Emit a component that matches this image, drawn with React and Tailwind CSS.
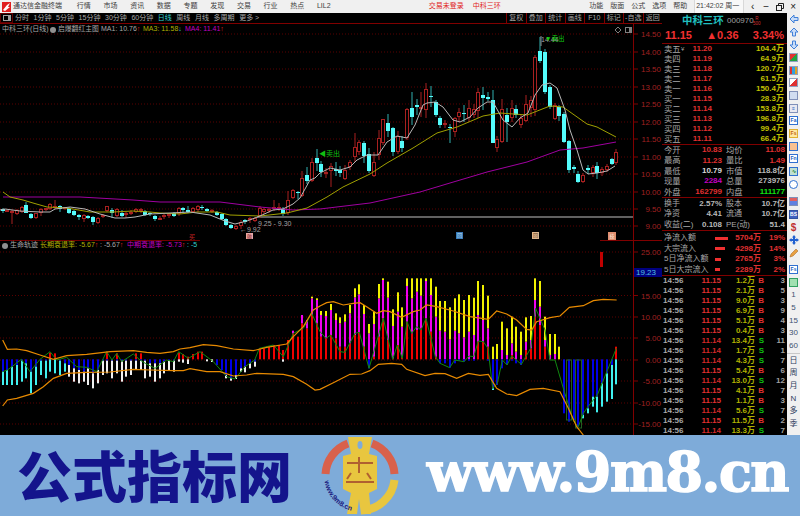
import React from 'react';

const menus = ['行情', '市场', '资讯', '数据', '专题', '发现', '交易', '行业', '热点', 'LIL2'];
const sysMenus = ['功能', '版面', '公式', '选项', '帮助'];
const periods = ['分时', '1分钟', '5分钟', '15分钟', '30分钟', '60分钟', '日线', '周线', '月线', '多周期', '更多 >'];
const chartBtns = ['复权', '叠加', '统计', '画线', 'F10', '标记', '-自选', '返回'];

const barX = (k) => 2.7 + 4.757 * k;

// [up, high, bodyTop, bodyBottom, low] in page pixels
const candles = [
  [0,208,209,211,213],[1,210,210,212,212],[1,210,211,213,224],[1,209,210,214,215],[1,206,207,212,213],[0,202,205,213,213],
  [0,213,214,218,219],[1,213,213,218,219],[1,208,209,213,216],[1,208,208,210,211],[1,203,204,209,210],[1,200,206,207,209],
  [0,205,206,209,212],[1,207,207,209,210],[0,207,208,213,214],[0,210,211,215,216],[0,214,215,217,220],[1,214,215,219,222],
  [0,215,216,218,219],[0,216,217,222,225],[1,217,218,223,224],[1,214,215,217,218],[1,206,206,211,212],[0,208,210,213,218],
  [1,208,209,216,217],[0,210,213,216,217],[1,212,213,215,218],[1,210,212,214,215],[1,208,209,212,213],[1,208,209,211,213],
  [0,210,211,215,216],[0,212,213,214,216],[0,215,216,219,221],[1,216,218,219,220],[1,214,215,217,219],[1,213,214,216,218],
  [0,212,213,216,217],[1,207,208,214,216],[0,207,208,210,213],[0,206,210,212,213],[1,207,208,212,213],[1,205,206,210,212],
  [0,205,207,208,210],[0,208,209,211,212],[1,209,210,212,213],[0,211,212,215,216],[0,213,214,219,220],[0,218,219,225,226],
  [0,224,225,228,229],[1,225,226,229,230],[1,220,222,226,229],[0,219,220,222,224],[1,217,218,219,223],[1,217,218,221,222],
  [1,206,208,216,218],[1,207,209,212,214],[1,208,209,211,213],[1,200,207,209,211],[1,203,207,209,211],[0,207,209,214,216],
  [1,191,200,213,215],[1,189,190,198,199],[0,191,192,193,199],[1,171,178,196,197],[0,167,175,181,184],[1,158,162,181,182],
  [0,149,158,163,171],[0,161,164,172,177],[1,168,172,173,178],[1,163,166,171,187],[0,162,169,171,176],[0,166,170,173,177],
  [1,165,170,179,180],[1,160,162,167,170],[1,133,147,157,162],[1,140,142,152,155],[0,141,143,156,163],[0,148,154,171,173],
  [1,152,162,176,177],[1,130,138,155,160],[1,119,119,143,145],[0,114,123,131,137],[0,127,128,152,156],[1,131,136,152,154],
  [0,136,141,148,152],[1,108,109,138,140],[0,92,108,117,125],[0,99,105,107,115],[1,92,107,109,117],[1,83,89,110,118],
  [0,86,96,97,107],[0,100,102,115,117],[0,116,118,125,128],[1,120,123,125,128],[0,124,127,128,143],[1,117,118,132,137],
  [1,108,112,117,122],[0,105,113,114,122],[1,100,108,118,122],[1,104,109,115,118],[1,88,92,111,118],[0,87,95,98,110],
  [0,92,97,99,101],[0,90,100,143,143],[1,136,139,148,152],[1,99,109,142,143],[0,108,115,122,142],[1,100,108,118,122],
  [0,105,109,115,118],[1,114,118,125,128],[1,95,104,121,122],[1,96,100,108,117],[1,55,57,110,116],[0,37,51,61,63],
  [0,49,52,92,94],[0,85,87,107,109],[1,103,105,119,120],[0,105,107,116,121],[0,112,114,142,143],[0,140,141,170,173],
  [0,165,167,169,173],[0,171,174,182,183],[1,173,175,182,183],[0,165,168,170,174],[1,165,167,173,177],[0,162,166,173,179],
  [1,167,169,173,176],[1,164,166,170,172],[0,158,159,164,165],[1,149,152,163,165],
];

const ma1 = [[0,210],[5,209],[20,211],[40,212],[50,212],[55,209],[70,207],[85,209],[100,214],[115,218],[125,218],[135,217],[150,214],[170,213],[190,212],[210,215],[225,221],[235,224],[247,221],[260,216],[273,210],[283,209],[293,204],[300,198],[310,180],[315,178],[320,173],[330,168],[340,170],[350,167],[357,160],[367,155],[378,155],[387,142],[397,136],[407,138],[415,125],[423,105],[427,103],[435,102],[443,107],[453,120],[460,122],[470,117],[478,108],[487,102],[493,102],[503,120],[512,127],[520,118],[528,113],[535,95],[542,85],[550,83],[557,88],[565,110],[570,130],[577,150],[583,170],[588,174],[597,173],[607,171],[615,166]];
const ma3 = [[3,192],[10,197],[23,200],[33,203],[47,207],[67,208],[90,212],[113,212],[133,211],[150,212],[160,213],[180,214],[197,212],[217,212],[230,215],[260,216],[287,213],[307,208],[327,197],[343,187],[370,174],[387,163],[413,148],[437,133],[457,127],[483,116],[500,113],[527,115],[550,106],[563,107],[587,124],[597,127],[616,137]];
const ma4 = [[3,197],[33,197],[80,197],[133,200],[160,202],[193,202],[220,202],[260,207],[293,210],[320,209],[370,203],[420,192],[450,183],[487,172],[527,162],[560,150],[583,148],[616,142]];

const priceGrid = [34, 52, 69, 87, 104, 122, 139, 157, 174, 192, 209, 226];
const priceLabels = ['14.50', '14.00', '13.50', '13.00', '12.50', '12.00', '11.50', '11.00', '10.50', '10.00', '9.50', '9.00'];
const indGrid = [252, 274, 295.5, 317, 338, 360, 381, 403, 424];
const indLabels = ['25.00', '', '15.00', '10.00', '5.00', '0.00', '-5.00', '-10.00', '-15.00'];

// stacks measured from the zero line: [going up, going down], colour letter + end y in a 3x crop of y=200
const bars = [
  ['', 'b515 c555'],['', 'b510 c555'],['', 'b500 c555'],['', 'b495 c555'],['', 'b482 c545'],['', 'b490 c535'],['', 'b515 c580'],['', 'b500 c555'],
  ['', 'b482 c525'],['', 'b482 c535'],['r458', 'c515'],['r460', 'c520'],['', 'b482 c525'],['', 'b490 c515'],['', 'b495 w530'],['', 'b505 w545'],
  ['', 'b510 w550'],['', 'b515 w545'],['', 'b505 w555'],['', 'b520 w565'],['', 'b510 w550'],['', 'b482 w525'],['r455', 'b482 w520'],['', 'b482 w535'],
  ['r460', 'b482 w520'],['', 'b482 w545'],['', 'b482 w530'],['', 'b482 w525'],['r460', 'b482 w510'],['r460', 'b482 w510'],['', 'b482 w535'],['', 'b490 w530'],
  ['', 'b490 w545'],['', 'b490 w535'],['', 'b485 w520'],['', 'b482 w510'],['', 'b482 w515'],['r458', 'w485'],['r462', 'w488'],['r470', 'w492'],
  ['r462', ''],['r455', ''],['r455', ''],['', 'w484'],['', 'w486'],['', 'b495'],['', 'b510'],['', 'b525 w535'],
  ['', 'b535 w542'],['', 'b525 w537'],['', 'b505 w515'],['', 'b500 w517'],['', 'b490 w505'],['', 'b485 w500'],['r445', ''],['r445', ''],
  ['r440', ''],['r435', ''],['r435', ''],['r450', 'w485'],['r420', ''],['r400 m392', ''],['r410', ''],['r370 m345', ''],
  ['r385 m360', ''],['r345 m295 y290', ''],['r370 m300 y295', ''],['r410 m345 y333', ''],['r415 m348 y333', ''],['r405 m330 y312', ''],['r415 m360 y340', ''],['r440 m370 y352', ''],
  ['r440 m365 y343', ''],['r430 m340 y315', ''],['r405 m292 y265', ''],['r397 m283 y253', ''],['r440 m342 y315', ''],['m400 y372', 'b505'],['r470 m372 y335', ''],['r410 m295 y252', ''],
  ['r355 m240 y235', ''],['r420 m293 y245', ''],['r475 m378 y328', ''],['r435 m335 y277', ''],['r470 m380 y322', ''],['r365 m258 y235', ''],['r400 m295 y235', ''],['r390 m275 y235', ''],
  ['r385 m287 y235', ''],['r355 m243 y235', ''],['r395 m285 y235', ''],['r470 m350 y260', ''],['m392 y303', 'b490'],['m395 y303', 'b490'],['m418 y322', 'b503'],['m392 y295', 'b490'],
  ['m400 y283', 'b482'],['m412 y300', 'b485'],['m395 y285', 'b482'],['m405 y293', 'b482'],['r425 m345 y243', ''],['r425 m360 y255', ''],['r440 m385 y287', 'b482'],['y440', 'b565 c570'],
  ['y432', 'b555'],['m450 y365', 'b505'],['m465 y385', 'b495'],['r465 m430 y350', 'b482'],['m455 y380', 'b490'],['m465 y395', 'b495'],['r450 m425 y352', ''],['r445 m420 y348', ''],
  ['r350 m300 y235', ''],['r375 m320 y243', ''],['r440 m420 y350', ''],['m465 y402', ''],['m462 y402', ''],['y440', ''],['', 'b640'],['', 'b665'],
  ['', 'b660'],['', 'b680'],['', 'b645 c655'],['', 'b625 c640'],['', 'b590 c620'],['', 'b590 c637'],['', 'b550 c620'],['', 'b520 c605'],
  ['', 'b495 c597'],['r440', 'c553'],
];
const barColors = { r: '#f00000', m: '#f000f0', y: '#f0f000', b: '#0000e8', c: '#40f0f0', w: '#f0f0f0' };

const fromLeft = (pts) => pts.map(([x, y]) => [x / 3, 200 + y / 3]);
const fromRight = (pts) => pts.map(([x, y]) => [320 + x / 3, 200 + y / 3]);

const bandUp = [
  ...fromLeft([[8,420],[22,448],[50,447],[80,452],[120,465],[160,478],[200,467],[260,463],[330,455],[400,452],[440,457],[480,460],[520,455],[540,447],[570,443],[610,434],[650,437],[700,447],[760,452],[800,442],[860,432],[880,410],[910,380],[940,330]]),
  ...fromRight([[0,318],[20,308],[40,305],[70,315],[100,310],[120,308],[140,320],[170,340],[190,332],[210,335],[245,352],[280,335],[300,330],[320,315],[350,320],[400,333],[450,350],[505,358],[530,333],[560,342],[590,360],[620,388],[635,390],[650,365],[690,353],[720,348],[748,322],[790,317],[820,302],[850,298],[890,300]]),
];
const bandDown = [
  ...fromLeft([[8,618],[22,600],[50,595],[100,580],[130,560],[160,535],[200,520],[260,517],[330,516],[400,508],[450,510],[520,512],[550,512],[570,506],[620,515],[660,515],[700,528],[740,525],[770,520],[850,523],[880,530],[920,553],[945,570]]),
  ...fromRight([[0,568],[40,548],[90,523],[125,522],[150,512],[175,493],[215,490],[245,493],[260,508],[315,527],[345,520],[375,521],[410,535],[445,520],[480,526],[505,523],[530,565],[560,582],[590,587],[630,568],[670,565],[720,575],[745,625],[770,680],[790,705]]),
];
const greenLine = [
  ...fromLeft([[8,515],[22,510],[36,500],[64,478],[90,515],[120,478],[150,455],[170,480],[200,472],[230,500],[260,502],[290,515],[320,455],[336,480],[350,460],[365,485],[400,462],[420,480],[436,490],[465,505],[500,480],[520,485],[536,455],[565,475],[600,455],[640,485],[680,530],[705,537],[735,500],[764,480],[778,445],[820,435],[850,470],[880,400],[910,385],[935,340]]),
  ...fromRight([[0,395],[18,415],[32,405],[60,455],[75,457],[105,400],[118,397],[147,505],[190,355],[218,478],[232,435],[247,475],[261,365],[275,400],[290,380],[303,390],[318,355],[346,470],[360,490],[389,503],[404,480],[432,485],[447,468],[461,470],[475,423],[490,425],[504,445],[518,565],[532,550],[547,480],[561,495],[575,468],[604,493],[632,445],[647,325],[675,390],[690,480],[705,480],[733,575],[761,665],[775,680],[790,640],[804,620],[832,585],[889,445]]),
];

const toPoints = (pts) => pts.map((p) => p.join(',')).join(' ');

const sells = [['卖五', '11.20', '104.4万'], ['卖四', '11.19', '64.9万'], ['卖三', '11.18', '120.7万'], ['卖二', '11.17', '61.5万'], ['卖一', '11.16', '150.4万']];
const buys = [['买一', '11.15', '28.3万'], ['买二', '11.14', '153.8万'], ['买三', '11.13', '196.8万'], ['买四', '11.12', '99.4万'], ['买五', '11.11', '66.4万']];
const infoA = [
  ['今开', '10.83', 'text-[#e03030]', '均价', '11.08', 'text-[#e03030]'],
  ['最高', '11.23', 'text-[#e03030]', '量比', '1.49', 'text-[#e03030]'],
  ['最低', '10.79', 'text-[#d8d8d8]', '市值', '118.8亿', 'text-[#b8b8b8]'],
  ['现量', '2284', 'text-[#c000c0]', '总量', '273976', 'text-[#b8b8b8]'],
  ['外盘', '162799', 'text-[#e03030]', '内盘', '111177', 'text-[#10e010]'],
];
const infoB = [
  ['换手', '2.57%', '股本', '10.7亿'],
  ['净资', '4.41', '流通', '10.7亿'],
  ['收益(二)', '0.108', 'PE(动)', '51.4'],
];
const flows = [
  ['净流入额', 'w-[13px]', '5704万', '19%'],
  ['大宗流入', 'w-[10px]', '4298万', '14%'],
  ['5日净流入额', 'w-[6px]', '2765万', '3%'],
  ['5日大宗流入', 'w-[5px]', '2289万', '2%'],
];
const ticks = [
  ['11.15', '1.2万', 'B', '3'], ['11.15', '2.1万', 'B', '5'], ['11.15', '9.0万', 'B', '3'], ['11.15', '6.9万', 'B', '9'],
  ['11.15', '5.1万', 'B', '4'], ['11.15', '0.4万', 'B', '3'], ['11.14', '13.4万', 'S', '11'], ['11.14', '1.7万', 'S', '1'],
  ['11.14', '4.3万', 'S', '7'], ['11.15', '5.4万', 'B', '6'], ['11.14', '13.0万', 'S', '12'], ['11.15', '4.1万', 'B', '7'],
  ['11.15', '1.1万', 'B', '3'], ['11.14', '5.6万', 'S', '7'], ['11.15', '11.5万', 'B', '2'], ['11.14', '13.3万', 'S', '7'],
];

const TitleBar = () => (
  <div className="h-[13px] flex items-center bg-[#f0f0f0] text-[7px] text-[#404040]">
    <div className="w-[13px] pl-[2px]">
      <svg width="9" height="10" viewBox="0 0 9 10" className="block">
        <rect width="9" height="10" fill="#e02020" />
        <path d="M1 8 L5 3 L8 1 L6 5 L8 5 L3 9 Z" fill="#ffffff" />
      </svg>
    </div>
    <span className="w-[64px]">通达信金融终端</span>
    <div className="w-[353px] flex">
      {menus.map((m) => <span key={m} className="w-[26.7px]">{m}</span>)}
    </div>
    <div className="w-[161px] flex text-[#e02020]">
      <span className="w-[44px]">交易未登录</span>
      <span>中科三环</span>
    </div>
    <div className="w-[105px] flex">
      {sysMenus.map((m) => <span key={m} className="w-[21px]">{m}</span>)}
    </div>
    <div className="w-[50px] h-full flex items-center pl-[1px] bg-[#f8f8f8] border-x border-[#d8d8d8]">21:42:02 周一</div>
    <div className="flex-1 flex items-center text-[#202020] text-[10px] pl-[2px]">
      <span className="w-[13.5px] text-center">‹</span>
      <span className="w-[13.5px] text-center">−</span>
      <span className="w-[13.5px] flex justify-center">
        <svg width="8" height="8" viewBox="0 0 8 8" fill="none" stroke="#202020"><rect x="0.5" y="2.5" width="5" height="5" /><path d="M2.5 2.5 V0.5 H7.5 V5.5 H5.5" /></svg>
      </span>
      <span className="w-[13.5px] text-center">×</span>
    </div>
  </div>
);

const PeriodBar = () => (
  <div className="h-[11px] flex items-center border-b border-[#800000] text-[7px] text-[#a8a8a8]">
    <div className="w-[13px] h-full border border-[#600000] flex items-center justify-center">
      <svg width="8" height="6" viewBox="0 0 8 6" fill="none" stroke="#a0a0a0"><rect x="0.5" y="0.5" width="7" height="5" /><rect x="5" y="1" width="2" height="4" fill="#a0a0a0" stroke="none" /></svg>
    </div>
    <div className="flex gap-[4.6px] pl-[2px]">
      {periods.map((p) => <span key={p} className={p === '日线' ? 'text-[#30d0d0]' : ''}>{p}</span>)}
    </div>
    <div className="ml-auto flex h-full">
      {chartBtns.map((b) => <span key={b} className="w-[19.5px] flex items-center justify-center border-l border-[#800000]">{b}</span>)}
    </div>
  </div>
);

const Arrow = ({ color }) => <span className={`${color} text-[7px] font-bold`}>↑</span>;

const Axis = ({ grid, labels }) => (
  <>
    <line x1="633.5" x2="633.5" y1="24" y2="435" stroke="#800000" />
    {grid.map((y, i) => (
      <g key={y}>
        <line x1="0" x2="633" y1={y} y2={y} stroke="#5a0000" strokeDasharray="1 2" />
        <line x1="634" x2="638" y1={y} y2={y} stroke="#800000" />
        <text x="661" y={y + 3} textAnchor="end" fill="#a02020" className="text-[8px]">{labels[i]}</text>
      </g>
    ))}
  </>
);

const MainChart = () => (
  <div className="relative h-[216px]">
    <div className="absolute top-0 left-[2px] h-[11px] flex items-center text-[7px] text-[#a8a8a8] whitespace-nowrap">
      <span className="w-[48px]">中科三环(日线)</span>
      <span className="w-[6px] h-[6px] rounded-full bg-[#909090] mr-[2px]" />
      <span className="w-[43px] text-[6.8px]">启爆翻红主图</span>
      <span className="w-[42px]">MA1: 10.76<Arrow color="text-[#e02020]" /></span>
      <span className="w-[42px] text-[#b0b000]">MA3: 11.58<span className="text-[#30d0d0] font-bold">↓</span></span>
      <span className="text-[#c000c0]">MA4: 11.41<Arrow color="text-[#e02020]" /></span>
    </div>
    <svg width="662" height="216" viewBox="0 24 662 216" className="block">
      <Axis grid={priceGrid} labels={priceLabels} />
      <line x1="257" x2="633" y1="217" y2="217" stroke="#606060" strokeWidth="2" />
      {candles.map(([up, high, top, bottom, low], k) => {
        const x = Math.round(barX(k));
        return up ? (
          <g key={k} stroke="#a82020">
            <line x1={x} x2={x} y1={high} y2={top} />
            <line x1={x} x2={x} y1={bottom} y2={low} />
            <rect x={x - 1.5} y={top + 0.5} width="3" height={Math.max(bottom - top - 1, 1)} fill="#000000" />
          </g>
        ) : (
          <g key={k}>
            <line x1={x} x2={x} y1={high} y2={low} stroke="#30b0b0" />
            <rect x={x - 2} y={top} width="4" height={Math.max(bottom - top, 1)} fill="#54fcfc" />
          </g>
        );
      })}
      <polyline points={toPoints(ma4)} fill="none" stroke="#a000a0" />
      <polyline points={toPoints(ma3)} fill="none" stroke="#a0a000" />
      <polyline points={toPoints(ma1)} fill="none" stroke="#b8b8b8" />
      <text x="319" y="156" fill="#10c010" className="text-[7px]">◀卖出</text>
      <text x="541" y="42" fill="#a0a0a0" className="text-[7px]">14.44</text>
      <text x="545" y="41" fill="#10d010" className="text-[6.5px]">▼卖出</text>
      <path d="M541 36 V46" stroke="#909090" />
      <text x="258" y="226" fill="#a0a0a0" className="text-[7px]">9.25 - 9.30</text>
      <text x="240" y="232" fill="#a0a0a0" className="text-[7px]">←9.92</text>
      <g fill="none" stroke="#808080">
        <path d="M618 27 L621 30 L618 33 L615 30 Z" />
        <rect x="625.5" y="27.5" width="6" height="5" />
      </g>
      <rect x="629" y="28" width="2" height="4" fill="#808080" />
      <text x="192" y="239" textAnchor="middle" fill="#c02020" className="text-[6px]">买</text>
    </svg>
  </div>
);

const IndicatorChart = () => (
  <div className="relative h-[195px]">
    <div className="absolute top-[1px] left-[2px] h-[9px] flex items-center text-[7px] whitespace-nowrap">
      <span className="w-[6px] h-[6px] rounded-full bg-[#909090] mr-[2px]" />
      <span className="w-[30px] text-[#a8a8a8]">生命轨迹</span>
      <span className="w-[60px] text-[#b0b000]">长期衰退率: -5.67<Arrow color="text-[#e02020]" /></span>
      <span className="w-[27px] text-[#a8a8a8]">: -5.67<Arrow color="text-[#e02020]" /></span>
      <span className="w-[60px] text-[#c000c0]">中期衰退率: -5.73<Arrow color="text-[#e02020]" /></span>
      <span className="text-[#30d0d0]">: -5</span>
    </div>
    <svg width="662" height="195" viewBox="0 240 662 195" className="block">
      <line x1="0" x2="200" y1="240.5" y2="240.5" stroke="#700000" />
      <line x1="600" x2="662" y1="240.5" y2="240.5" stroke="#800000" />
      <Axis grid={indGrid} labels={indLabels} />
      <rect x="634" y="268" width="28" height="9" fill="#000080" />
      <text x="636" y="275" fill="#50c0e0" className="text-[8px]">19.23</text>
      <rect x="600" y="252" width="3" height="15" fill="#c00000" />
      {bars.map(([up, down], k) => {
        const x = Math.round(barX(k)) - 1;
        return [up, down].map((stack, d) => {
          let from = 478;
          return stack.split(' ').filter(Boolean).map((t) => {
            const to = Number(t.slice(1));
            const y1 = 200 + Math.min(from, to) / 3;
            const h = Math.abs(to - from) / 3;
            from = to;
            return <rect key={`${k}${d}${t}`} x={x} y={y1} width="2" height={h} fill={barColors[t[0]]} />;
          });
        });
      })}
      <g fill="none" stroke="#206020">
        <rect x="566.5" y="360" width="5" height="60" />
        <rect x="575.5" y="360" width="6" height="68" />
      </g>
      <polyline points={toPoints(greenLine)} fill="none" stroke="#108810" />
      <polyline points={toPoints(bandUp)} fill="none" stroke="#e88a00" strokeWidth="1.2" />
      <polyline points={toPoints(bandDown)} fill="none" stroke="#e88a00" strokeWidth="1.2" />
    </svg>
    <span className="absolute left-[246px] -top-[7px] w-[7px] h-[6px] bg-[#e8a8a8] text-[5px] leading-[6px] text-center text-[#802020]">融</span>
    <span className="absolute left-[456px] -top-[8px] w-[7px] h-[7px] bg-[#3878b8] text-[5px] leading-[7px] text-center text-[#c0e0f0]">回</span>
    <span className="absolute left-[532px] -top-[8px] w-[7px] h-[7px] bg-[#e0b890] text-[5px] leading-[7px] text-center text-[#604020]">回</span>
    <span className="absolute left-[608px] -top-[8px] w-[8px] h-[8px] bg-[#e09070] text-[5px] leading-[8px] text-center text-[#fff0e0]">技</span>
  </div>
);

const QuoteRow = ([label, price, vol], i, tag) => (
  <div key={label} className="h-[10px] flex items-center">
    <span className="w-[9px] flex-none" />
    <span className="text-[8.3px] text-[#a8a8a8] w-[17px] flex-none">{label}</span>
    <span className="text-[6px] text-[#a8a8a8] w-[10px] flex-none">{tag}</span>
    <span className="w-[21px] text-right font-bold text-[#e03030] flex-none">{price}</span>
    <span className="flex-1 text-right font-bold text-[#c0c000] pr-[3px]">{vol}</span>
  </div>
);

const RightPanel = () => (
  <div className="w-[125px] flex-none flex flex-col text-[8px] overflow-hidden">
    <div className="h-[15px] flex items-center pl-[20px] bg-black">
      <span className="text-[10.4px] font-bold text-[#20c0c0] w-[45px]">中科三环</span>
      <span className="text-[8px] text-[#a0a0a0] w-[26px]">000970</span>
      <span className="text-[4.5px] leading-[5px] text-[#d03030] text-center">R<br />500</span>
    </div>
    <div className="h-[16px] flex items-center justify-between px-[3px] border-b border-[#800000] text-[11px] font-bold text-[#f03030]">
      <span>11.15</span>
      <span>▲0.36</span>
      <span>3.34%</span>
    </div>
    <div className="h-[50px] -ml-[7px]">{sells.map((r, i) => QuoteRow(r, i, i === 0 ? '¥' : ''))}</div>
    <div className="h-[1px] flex">
      <span className="w-[62px] bg-[#a06020]" />
      <span className="flex-1 bg-[#2050a0]" />
    </div>
    <div className="h-[50px] -ml-[7px]">{buys.map((r, i) => QuoteRow(r, i, ''))}</div>
    <div className="h-[54px] border-y border-[#800000] pl-[2px]">
      {infoA.map(([l1, v1, c1, l2, v2, c2]) => (
        <div key={l1} className="h-[10.4px] flex items-center font-bold">
          <span className="w-[18px] text-[8.3px] font-normal text-[#a8a8a8]">{l1}</span>
          <span className={`w-[40px] text-right ${c1}`}>{v1}</span>
          <span className="w-[21px] pl-[4px] text-[8.3px] font-normal text-[#a8a8a8]">{l2}</span>
          <span className={`w-[42px] text-right ${c2}`}>{v2}</span>
        </div>
      ))}
    </div>
    <div className="h-[33px] border-b border-[#800000] pl-[2px] pt-[1px]">
      {infoB.map(([l1, v1, l2, v2]) => (
        <div key={l1} className="h-[10.3px] flex items-center font-bold text-[#b8b8b8]">
          <span className="w-[30px] text-[8px] font-normal text-[#a8a8a8] whitespace-nowrap">{l1}</span>
          <span className="w-[28px] text-right">{v1}</span>
          <span className="w-[26px] pl-[4px] text-[8px] font-normal text-[#a8a8a8] whitespace-nowrap">{l2}</span>
          <span className="w-[37px] text-right">{v2}</span>
        </div>
      ))}
    </div>
    <div className="h-[45px] border-b border-[#800000] pl-[2px] pt-[2px]">
      {flows.map(([label, w, val, pct]) => (
        <div key={label} className="h-[10.6px] flex items-center">
          <span className="w-[51px] flex-none text-[8px] text-[#a8a8a8] whitespace-nowrap">{label}</span>
          <span className="w-[14px] flex-none"><span className={`block h-[3px] bg-[#f03030] ${w}`} /></span>
          <span className="w-[32px] flex-none text-right font-bold text-[#e03030]">{val}</span>
          <span className="flex-1 text-right font-bold text-[#e03030] pr-[2px]">{pct}</span>
        </div>
      ))}
    </div>
    <div className="pl-[1px]">
      {ticks.map(([price, vol, side, n], i) => (
        <div key={i} className="h-[10px] flex items-center font-bold">
          <span className="w-[20px] text-[#a8a8a8]">14:56</span>
          <span className={`w-[38px] text-right ${price === '11.15' ? 'text-[#e03030]' : 'text-[#d02828]'}`}>{price}</span>
          <span className="w-[34px] text-right text-[#b0b000]">{vol}</span>
          <span className={`w-[9px] text-right ${side === 'B' ? 'text-[#e03030]' : 'text-[#10c010]'}`}>{side}</span>
          <span className="w-[21px] text-right text-[#a0a0a0]">{n}</span>
        </div>
      ))}
    </div>
  </div>
);

const Tile = ({ a, b, label, labelColor = 'text-[#2060c0]' }) => (
  <span className={`relative w-[9px] h-[9px] flex items-center justify-center border ${a} ${b} text-[5px] font-bold leading-none ${labelColor}`}>{label}</span>
);

const Slot = ({ children, extra = '' }) => (
  <div className={`h-[12.7px] flex items-center justify-center ${extra}`}>{children}</div>
);

const BlueArrow = ({ d }) => (
  <svg width="10" height="10" viewBox="0 0 10 10"><path d={d} fill="#c8dcf8" stroke="#4080d8" /></svg>
);

const ToolColumn = () => (
  <div className="flex-1 bg-[#f0f0f0] text-[#405070] text-[8px] overflow-hidden">
    <Slot><BlueArrow d="M1 5 L5 1 V3.5 H9 V6.5 H5 V9 Z" /></Slot>
    <Slot><BlueArrow d="M5 1 L9 5 H6.5 V9 H3.5 V5 H1 Z" /></Slot>
    <Slot><BlueArrow d="M5 9 L9 5 H6.5 V1 H3.5 V5 H1 Z" /></Slot>
    <Slot><Tile a="border-[#90a0c0]" b="bg-[linear-gradient(135deg,#e03030_50%,#20a040_50%)]" label="" /></Slot>
    <Slot><Tile a="border-[#90a0c0]" b="bg-[linear-gradient(90deg,#e03030_33%,#30a0e0_33%,#30a0e0_66%,#e0a020_66%)]" label="" /></Slot>
    <Slot><Tile a="border-[#90a0c0]" b="bg-[linear-gradient(135deg,#ffffff_50%,#e03030_50%)]" label="" /></Slot>
    <Slot><Tile a="border-[#8090b8]" b="bg-[#d0dcf0]" label="" /></Slot>
    <Slot><Tile a="border-[#8090b8]" b="bg-[#e8e8f0]" label="≡" /></Slot>
    <Slot><Tile a="border-[#3070d0]" b="bg-[#ffffff]" label="Fa" /></Slot>
    <Slot><Tile a="border-[#e0b030]" b="bg-[#ffe8a0]" label="Fs" labelColor="text-[#c06010]" /></Slot>
    <Slot><Tile a="border-[#3070d0]" b="bg-[#f8c090]" label="" /></Slot>
    <Slot><Tile a="border-[#3070d0]" b="bg-[#ffffff]" label="Fn" /></Slot>
    <Slot><Tile a="border-[#3070d0]" b="bg-[#c0e0d0]" label="∿" labelColor="text-[#208040]" /></Slot>
    <Slot><Tile a="border-[#3070d0] rounded-full" b="bg-[#ffffff]" label="" /></Slot>
    <Slot extra="mt-[5px]"><Tile a="border-[#8090b8]" b="bg-[linear-gradient(180deg,#e06060_50%,#6080e0_50%)]" label="" /></Slot>
    <Slot><Tile a="border-[#3050a0]" b="bg-[#4060c0]" label="BS" labelColor="text-[#ffffff]" /></Slot>
    <Slot><span className="text-[10px] font-bold text-[#c03030]">$</span></Slot>
    <Slot>
      <svg width="10" height="10" viewBox="0 0 10 10"><path d="M5 0 L7 2.5 H6 V4 H7.5 V3 L10 5 L7.5 7 V6 H6 V7.5 H7 L5 10 L3 7.5 H4 V6 H2.5 V7 L0 5 L2.5 3 V4 H4 V2.5 H3 Z" fill="#2060d0" /></svg>
    </Slot>
    <Slot>
      <svg width="10" height="10" viewBox="0 0 10 10"><path d="M1 9 L2 6 L7 1 L9 3 L4 8 Z" fill="#e8a040" stroke="#a06020" strokeWidth="0.5" /></svg>
    </Slot>
    <Slot extra="mt-[4.5px]"><Tile a="border-[#3070d0]" b="bg-[#ffffff]" label="Fs" /></Slot>
    <Slot><Tile a="border-[#30a060]" b="bg-[#a0e0b0]" label="" /></Slot>
    {['1', '5', '15', '30', '60'].map((n) => <Slot key={n}>{n}</Slot>)}
    <div className="h-[1px] bg-[#c8c8c8] mt-[1px]" />
    {['日', '周', '月', 'N', '多', '季'].map((n) => <Slot key={n}><span className="text-[8px] text-[#304060]">{n}</span></Slot>)}
  </div>
);

const LogoMark = () => (
  <svg width="78" height="78" viewBox="0 0 78 78" className="block flex-none">
    <defs>
      <path id="ring" d="M3.5 44 A36 36 0 0 0 32 74" />
    </defs>
    <g fill="none" strokeWidth="8">
      <path d="M4.5 37 A34.5 34.5 0 0 1 27 6.5" stroke="#d8614c" />
      <path d="M51 6.5 A34.5 34.5 0 0 1 73.5 37" stroke="#d8614c" />
      <path d="M73.5 43 A34.5 34.5 0 0 1 40 73.5" stroke="#e8c63f" />
    </g>
    <path d="M27 0 H51 L48 17 L56 19 V52 L48 56 L50 77 H40 L38 62 L36 77 H26 L30 56 L22 52 V19 L30 17 Z" fill="#e8c63f" />
    <ellipse cx="39" cy="8" rx="2.5" ry="4" fill="#7eabd9" />
    <path d="M26 26 H52 M38 20 V36 M30 36 L26 42 M46 36 L50 42 M25 45 H53" stroke="#b06030" strokeWidth="2" fill="none" />
    <text fill="#1a1a80" className="text-[7px] font-bold">
      <textPath href="#ring">www.9m8.cn</textPath>
    </text>
  </svg>
);

const Watermark = () => (
  <div className="h-[81px] bg-[#7eabd9] flex items-center overflow-hidden">
    <span className="ml-[17px] pb-[4px] w-[304px] flex-none text-[55px] leading-none font-black text-[#14148c] whitespace-nowrap font-[Noto_Sans_CJK_SC,sans-serif]">公式指标网</span>
    <LogoMark />
    <span className="ml-[28px] pb-[7px] text-[54px] leading-none font-bold text-white tracking-[-1.5px] whitespace-nowrap font-[DejaVu_Serif,serif] [-webkit-text-stroke:1.5px_white]">www.9m8.cn</span>
  </div>
);

export default function App() {
  return (
    <div className="w-[800px] h-[516px] overflow-hidden flex flex-col bg-black font-[Liberation_Sans,Noto_Sans_CJK_SC,sans-serif]">
      <TitleBar />
      <div className="h-[422px] flex overflow-hidden">
        <div className="w-[662px] flex-none flex flex-col">
          <PeriodBar />
          <MainChart />
          <IndicatorChart />
        </div>
        <RightPanel />
        <ToolColumn />
      </div>
      <Watermark />
    </div>
  );
}
